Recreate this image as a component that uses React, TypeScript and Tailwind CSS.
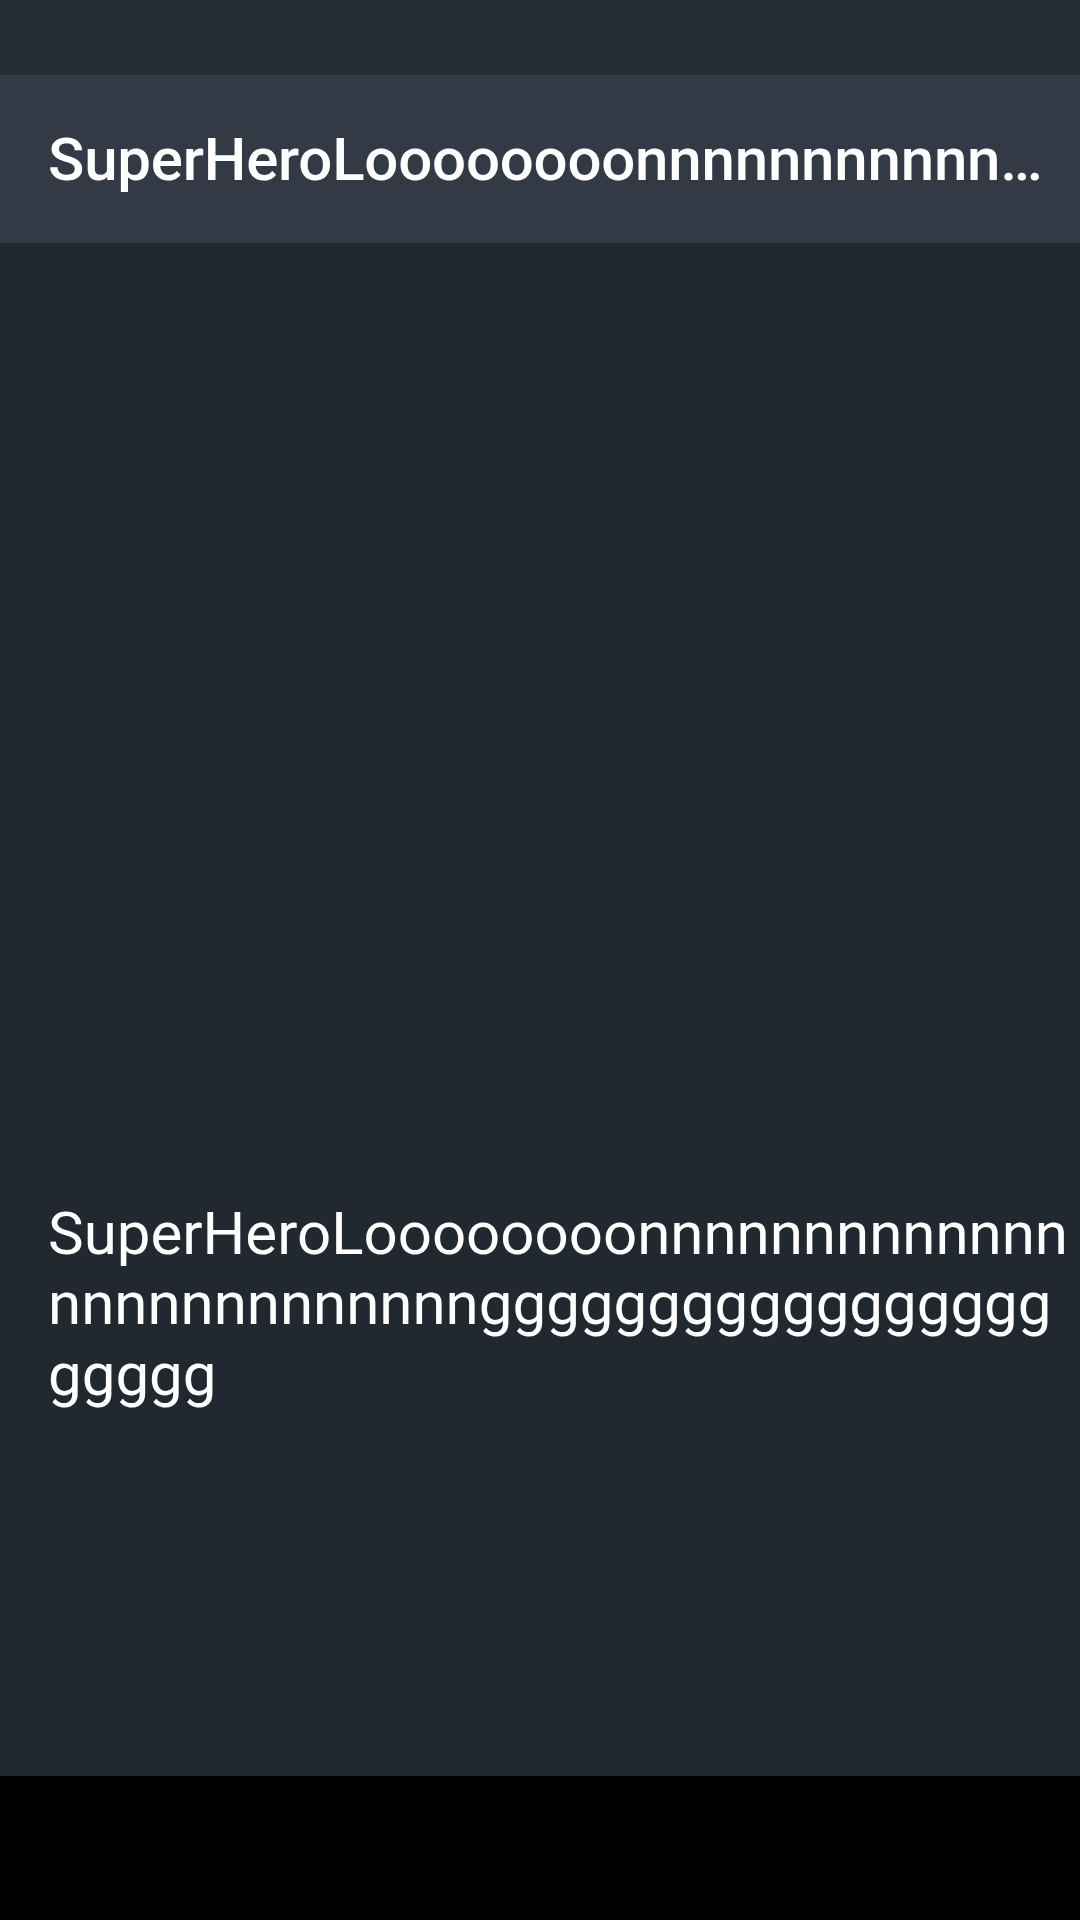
import React from "react";

const NAME =
  "SuperHeroLoooooooo" + "nnnnnnnnnnnnnnnnnnnnnnnnnn" + "gggggggggggggggggggggg";

export default function App() {
  return (
    <div
      className="flex h-[1920px] w-[1080px] flex-col overflow-hidden bg-[#222830] text-white"
      style={{ fontFamily: "Roboto, 'Noto Sans', sans-serif" }}
    >
      <div className="h-[75px] shrink-0 bg-[#262d37]" />
      <div className="flex h-[168px] shrink-0 items-center bg-[#333a46] pl-[48px] pr-[20px] pt-[3px]">
        <div className="min-w-0 overflow-hidden text-ellipsis whitespace-nowrap text-[60px] font-medium leading-[70.3px] tracking-[-0.2px]">
          {NAME}
        </div>
      </div>
      <div className="flex-1 bg-[#222830] pl-[48px] pt-[956px]">
        <div className="break-all text-[60px] font-normal leading-[70.3px]">{NAME}</div>
      </div>
      <div className="h-[144px] shrink-0 bg-black" />
    </div>
  );
}
